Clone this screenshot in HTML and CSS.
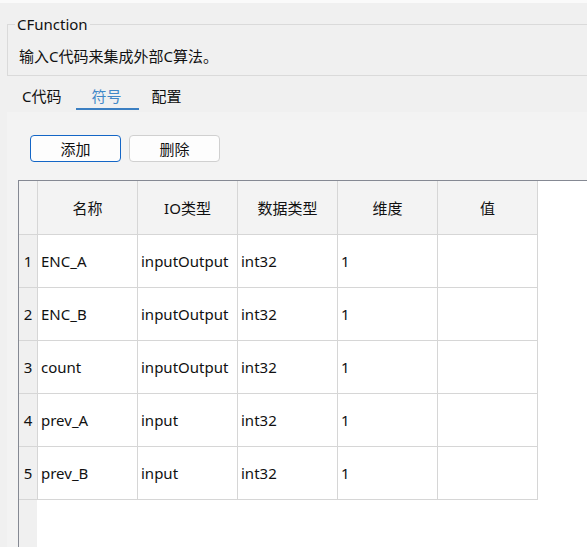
FILE: index.html
```html
<!DOCTYPE html>
<html lang="zh-CN">
<head>
<meta charset="utf-8">
<title>CFunction</title>
<link rel="stylesheet" href="styles.css">
</head>
<body>
<div class="window">
  <div class="top-strip"></div>

  <fieldset class="group">
    <legend class="group-title">CFunction</legend>
    <p class="group-desc">输入C代码来集成外部C算法。</p>
  </fieldset>

  <div class="tabs">
    <div class="tab">C代码</div>
    <div class="tab active">符号</div>
    <div class="tab">配置</div>
  </div>

  <div class="panel">
    <div class="toolbar">
      <button class="btn btn-default">添加</button>
      <button class="btn">删除</button>
    </div>

    <div class="grid-view">
      <div class="grid">
        <div class="cell corner"></div>
        <div class="cell head">名称</div>
        <div class="cell head">IO类型</div>
        <div class="cell head">数据类型</div>
        <div class="cell head">维度</div>
        <div class="cell head">值</div>

        <div class="cell rowhead">1</div>
        <div class="cell">ENC_A</div>
        <div class="cell">inputOutput</div>
        <div class="cell">int32</div>
        <div class="cell">1</div>
        <div class="cell"></div>

        <div class="cell rowhead">2</div>
        <div class="cell">ENC_B</div>
        <div class="cell">inputOutput</div>
        <div class="cell">int32</div>
        <div class="cell">1</div>
        <div class="cell"></div>

        <div class="cell rowhead">3</div>
        <div class="cell">count</div>
        <div class="cell">inputOutput</div>
        <div class="cell">int32</div>
        <div class="cell">1</div>
        <div class="cell"></div>

        <div class="cell rowhead">4</div>
        <div class="cell">prev_A</div>
        <div class="cell">input</div>
        <div class="cell">int32</div>
        <div class="cell">1</div>
        <div class="cell"></div>

        <div class="cell rowhead">5</div>
        <div class="cell">prev_B</div>
        <div class="cell">input</div>
        <div class="cell">int32</div>
        <div class="cell">1</div>
        <div class="cell"></div>
      </div>
    </div>
  </div>
</div>
</body>
</html>
```

FILE: styles.css
```css
html, body {
  margin: 0;
  padding: 0;
  height: 100%;
  overflow: hidden;
}

body {
  background: #f0f0f0;
  font-family: "Noto Sans", "Noto Sans CJK SC", sans-serif;
  font-size: 15px;
  line-height: 18px;
  color: #111;
}

.window {
  display: flex;
  flex-direction: column;
  height: 100%;
}

.top-strip {
  height: 3px;
  background: #fafafa;
  flex: none;
}

/* group box with caption */
.group {
  flex: none;
  margin: 12px -20px 0 7px;
  padding: 14px 0 10px 11px;
  border: 1px solid #dadada;
  min-width: 0;
}

.group-title {
  margin-left: -4px;
  padding: 0 2px;
  line-height: 18px;
}

.group-desc {
  margin: 0;
}

/* tab bar */
.tabs {
  flex: none;
  display: flex;
  padding-left: 7px;
  height: 36px;
  box-sizing: border-box;
}

.tab {
  padding: 11px 15px 3px;
  border-bottom: 2px solid transparent;
  height: 18px;
}

.tab.active {
  color: #4187c8;
  border-bottom-color: #3b7fc2;
  padding-right: 17px;
  margin-right: -2px;
}

/* tab page */
.panel {
  flex: 1;
  display: flex;
  flex-direction: column;
  margin: 0 -20px 0 7px;
  background: #f3f3f3;
  min-height: 0;
}

.toolbar {
  display: flex;
  gap: 8px;
  padding: 23px 0 0 23px;
  height: 27px;
  flex: none;
}

.btn {
  width: 91px;
  height: 27px;
  box-sizing: border-box;
  border: 1px solid #d0d0d0;
  border-radius: 4px;
  background: #fdfdfd;
  font: inherit;
  color: #111;
  padding: 0;
}

.btn-default {
  border-color: #1466c6;
}

/* item view */
.grid-view {
  flex: 1;
  margin: 18px 0 0 11px;
  border-left: 1px solid #858993;
  border-top: 1px solid #858993;
  background: linear-gradient(to right, #f0f0f0 18px, #ffffff 18px);
  min-height: 0;
}

.grid {
  display: grid;
  grid-template-columns: 19px repeat(5, 100px);
  grid-template-rows: 54px repeat(5, 53px);
  width: max-content;
}

.cell {
  box-sizing: border-box;
  border-right: 1px solid #d6d6d6;
  border-bottom: 1px solid #d6d6d6;
  background: #ffffff;
  display: flex;
  align-items: center;
  padding-left: 3px;
  white-space: nowrap;
  overflow: hidden;
}

.cell.head,
.cell.corner {
  background: #f3f3f3;
  justify-content: center;
  padding-left: 0;
}

.cell.rowhead {
  background: #f0f0f0;
  justify-content: center;
  padding-left: 0;
}
```
